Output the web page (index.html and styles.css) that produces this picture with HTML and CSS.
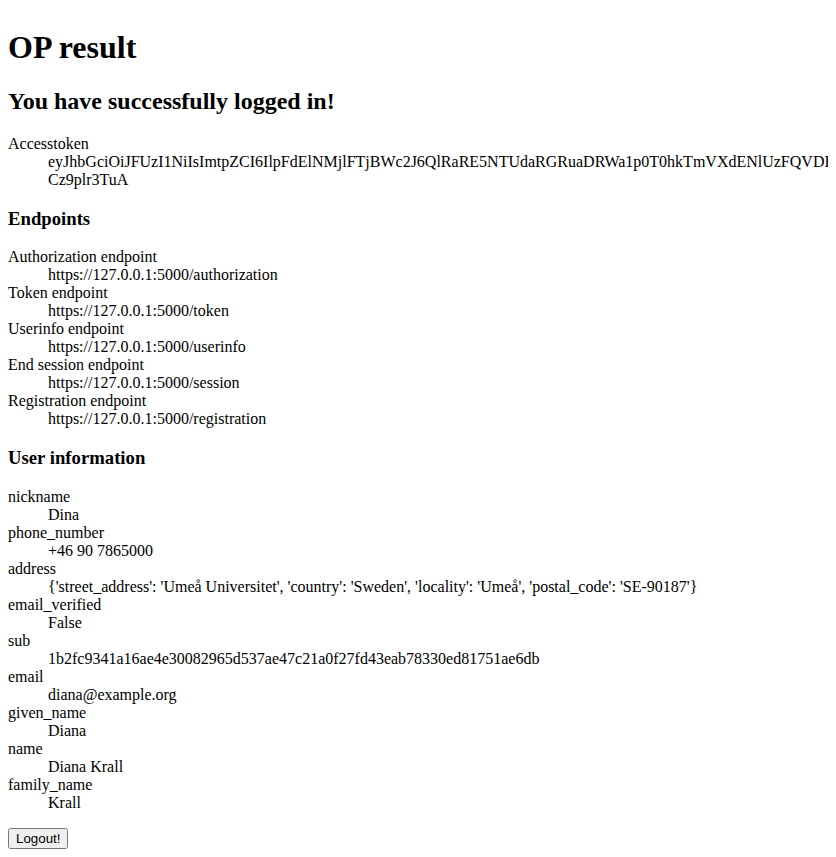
FILE: index.html
```html
<!DOCTYPE html>
<html>
<head>
<meta charset="utf-8">
<title>OP result</title>
<link rel="stylesheet" href="styles.css">
</head>
<body>
<h1>OP result</h1>
<h2>You have successfully logged in!</h2>
<dl>
<dt>Accesstoken</dt>
<dd>eyJhbGciOiJFUzI1NiIsImtpZCI6IlpFdElNMjlFTjBWc2J6QlRaRE5NTUdaRGRuaDRWa1p0T0hkTmVXdENlUzFQVDFlbmRpVmROcFBjTmd4UW1VeWFEbDZZVEl3T0hkemFIRktVMHQ0YmtGdWVFNXhVVGhoTVdSd1JqbDFibUp5VnpWc1p6VklhVkJ1YURBMFVYQkRRMmhZU0RZelVEVm5XSE5pTURaNlNFTkRPR3RhZHpWcVYzUjRhVmRZVkRGaVZHcGhPVVEzV0ZScFpHWjROMEpKU0dObFoxaDFVa3huVW1WQ1YxZE5NMHhsTVZGb1JHaFZVMHN6U3paeFQzQndXVEJ6Y1d4MFRFTjZUMVZGVlZWVlFVaHdXbHB5WlRGQk9WcFhhR3hJWTFWRU1qSnlWREpNVjNCNVNrUnZkbmR1VFZwbGJVUk5NVUp5VmxkeU1WbDJjbEJJZUdWbmVGUlpiM2hXV25aclZ1NHM0bE9WVm5Sb2JIaDZaWFZCTVVSS1NqQT0.mTZbWjZxaGRkMVdYOWlHcFB6bUJsTm9sVzR5OVJnUWZSN2pTYmFwM3dGa0FNbTJUN2VKaUtGcnpGeVpVbWVlWl-Cz9plr3TuA</dd>
</dl>
<h3>Endpoints</h3>
<dl>
<dt>Authorization endpoint</dt>
<dd>https://127.0.0.1:5000/authorization</dd>
<dt>Token endpoint</dt>
<dd>https://127.0.0.1:5000/token</dd>
<dt>Userinfo endpoint</dt>
<dd>https://127.0.0.1:5000/userinfo</dd>
<dt>End session endpoint</dt>
<dd>https://127.0.0.1:5000/session</dd>
<dt>Registration endpoint</dt>
<dd>https://127.0.0.1:5000/registration</dd>
</dl>
<h3>User information</h3>
<dl>
<dt>nickname</dt>
<dd>Dina</dd>
<dt>phone_number</dt>
<dd>+46 90 7865000</dd>
<dt>address</dt>
<dd>{'street_address': 'Umeå Universitet', 'country': 'Sweden', 'locality': 'Umeå', 'postal_code': 'SE-90187'}</dd>
<dt>email_verified</dt>
<dd>False</dd>
<dt>sub</dt>
<dd>1b2fc9341a16ae4e30082965d537ae47c21a0f27fd43eab78330ed81751ae6db</dd>
<dt>email</dt>
<dd>diana@example.org</dd>
<dt>given_name</dt>
<dd>Diana</dd>
<dt>name</dt>
<dd>Diana Krall</dd>
<dt>family_name</dt>
<dd>Krall</dd>
</dl>
<form class="logout" action="#" method="get">
<input class="logout-btn" type="submit" value="Logout!">
</form>
</body>
</html>
```

FILE: styles.css
```css
body {
  font-family: "Liberation Serif", "Times New Roman", serif;
  font-size: 16px;
  color: #000;
  background: #fff;
}
.logout {
  margin: 0;
}
.logout-btn {
  font-family: "Liberation Sans", Arial, sans-serif;
  font-size: 13.333px;
}
```
